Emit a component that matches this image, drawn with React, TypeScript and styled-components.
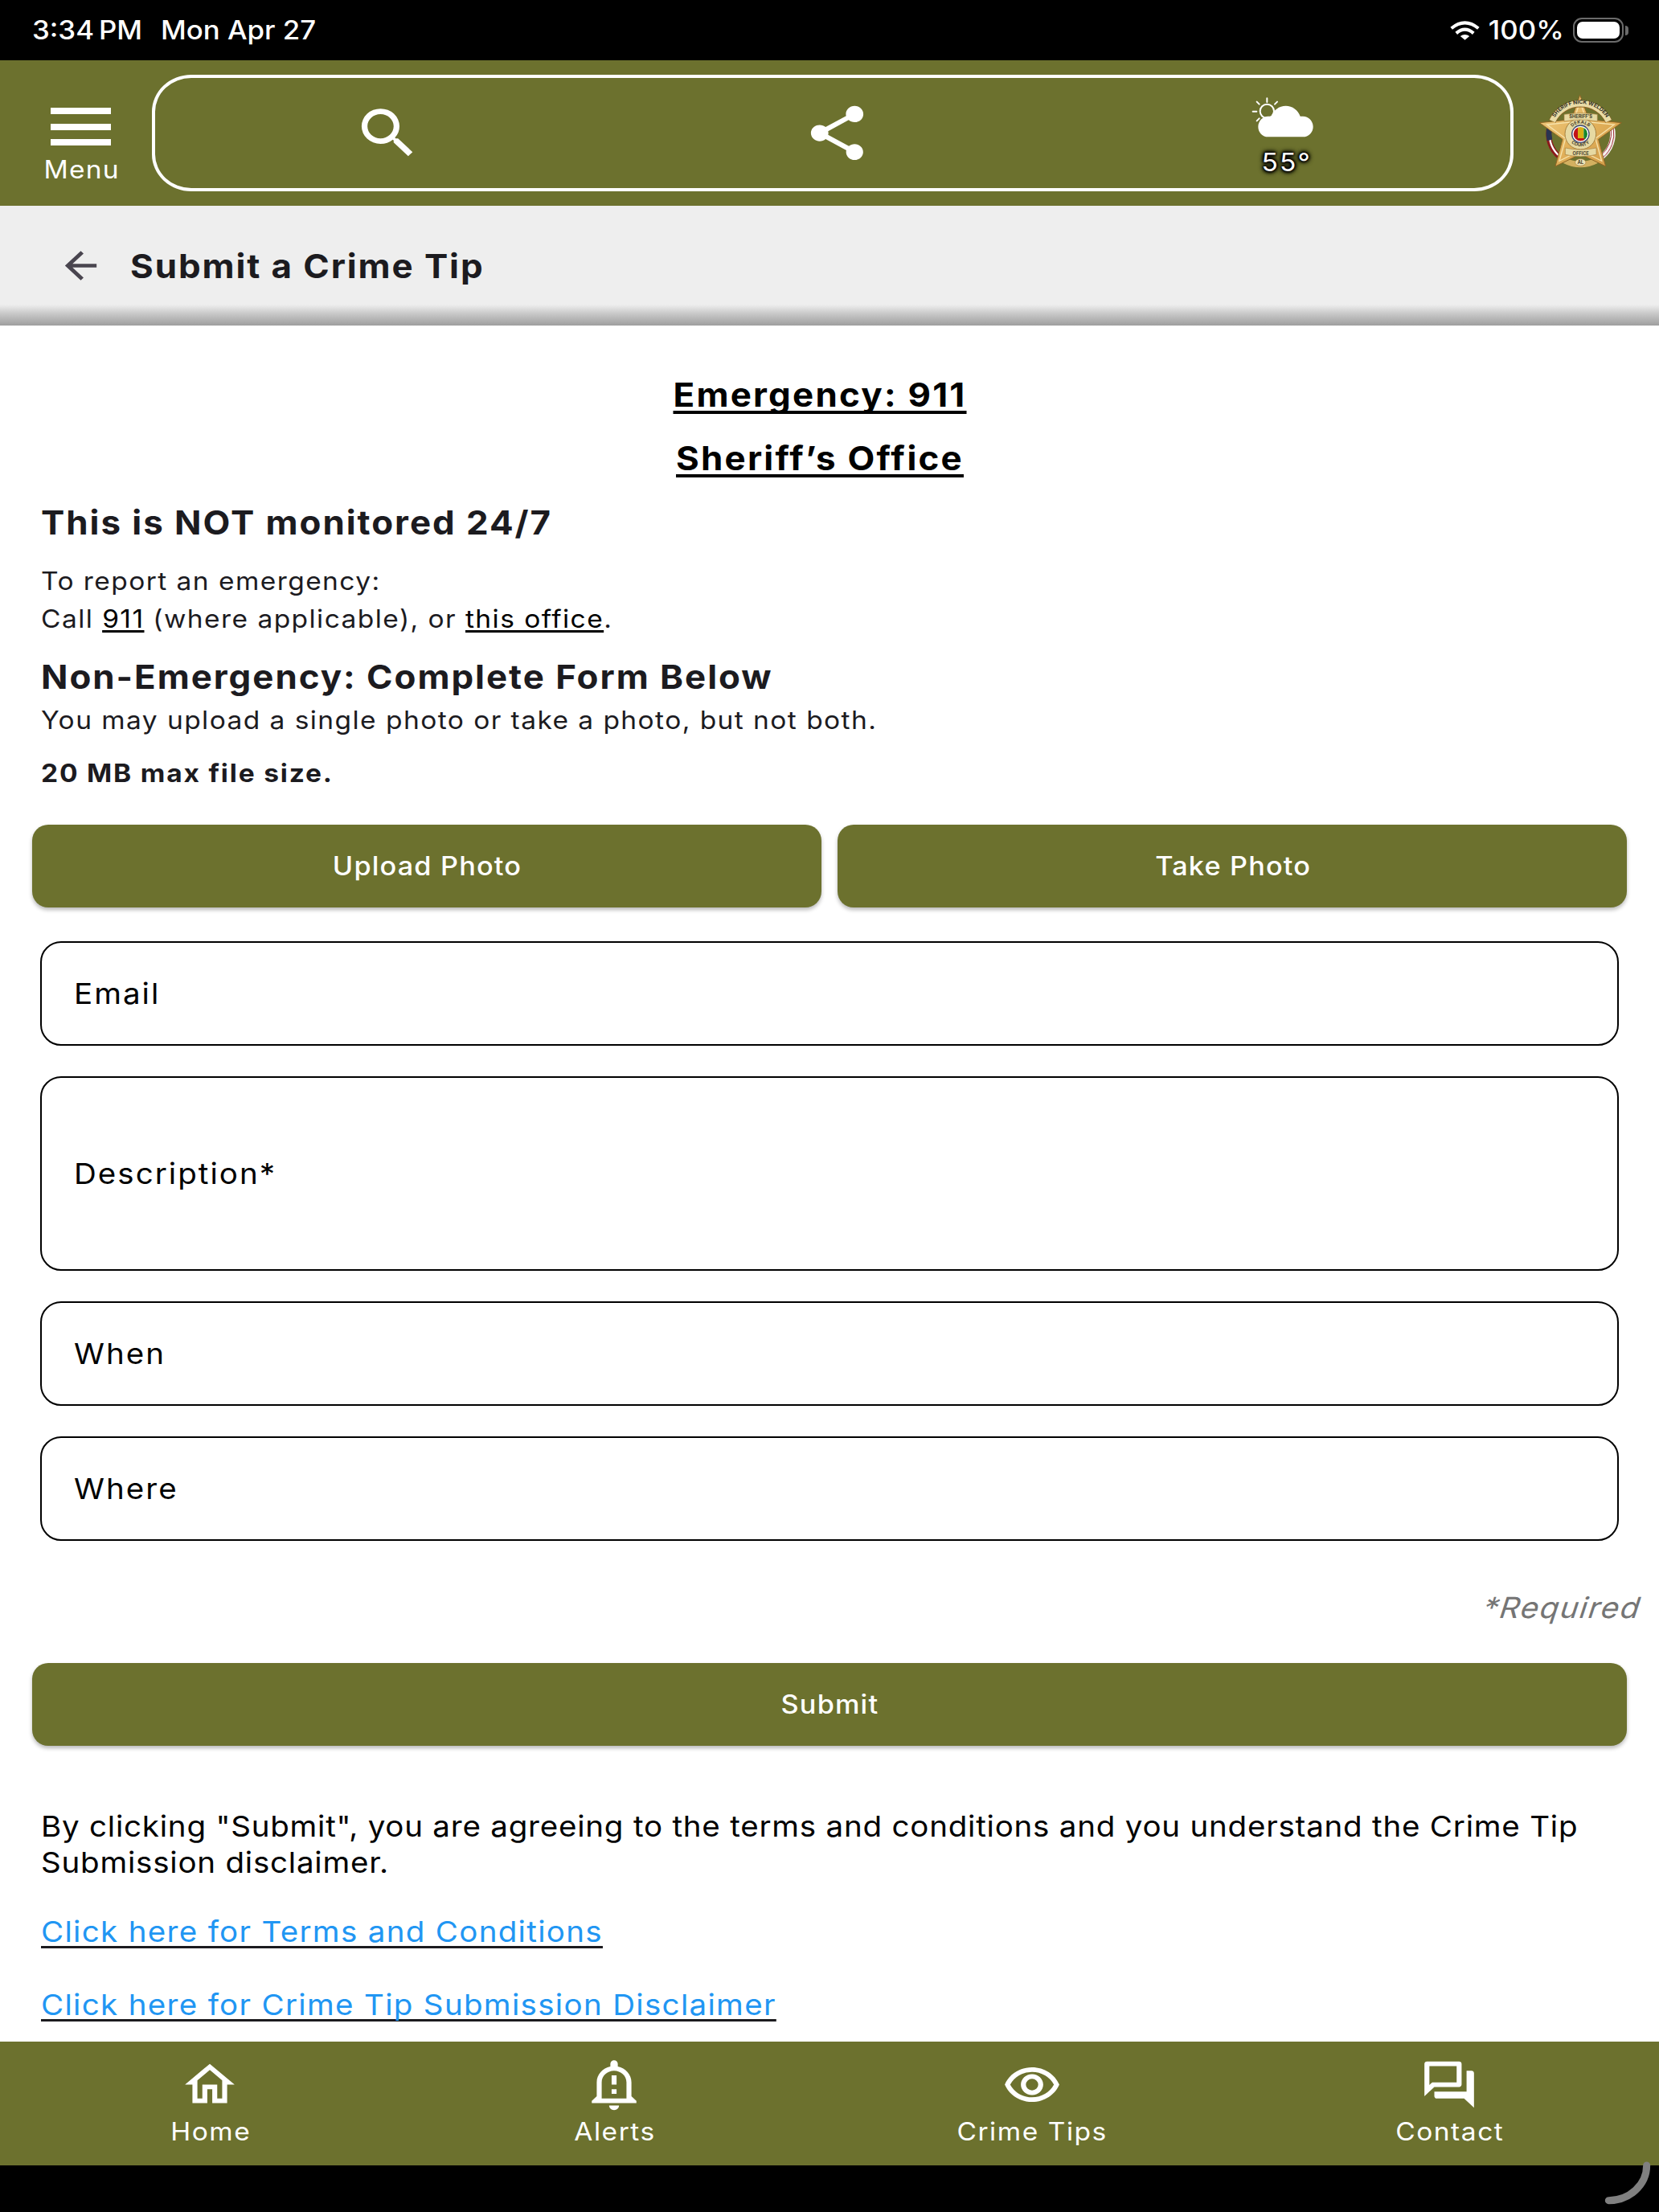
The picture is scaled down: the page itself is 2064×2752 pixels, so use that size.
import * as React from "react";
import styled, { createGlobalStyle, css } from "styled-components";
import {
  MdArrowBack,
  MdOutlineHome,
  MdOutlineNotificationImportant,
  MdOutlineQuestionAnswer,
  MdOutlineRemoveRedEye,
  MdSearch,
  MdShare
} from "react-icons/md";

const olive = "#6c712e";
const ink = "#1c1b1f";

const GlobalStyle = createGlobalStyle`
  * {
    box-sizing: border-box;
  }
  body {
    margin: 0;
    background: #000;
    font-family: Inter, "Liberation Sans", sans-serif;
  }
`;

// the type is set a little wider than Inter's own proportions
const wide = css`
  transform: scaleX(1.07);
  transform-origin: 0 50%;
`;

const Screen = styled.div`
  position: relative;
  display: flex;
  flex-direction: column;
  width: 2064px;
  height: 2752px;
  overflow: hidden;
  background: #000;
`;

const StatusBar = styled.div`
  display: flex;
  align-items: center;
  flex: none;
  height: 75px;
  padding: 0 38px 0 40px;
  color: #fff;
  font-size: 32.5px;
  font-weight: 500;
`;

const StatusText = styled.span`
  ${wide}
`;

const StatusDate = styled(StatusText)`
  margin-left: 32px;
`;

const StatusRight = styled.div`
  display: flex;
  align-items: center;
  margin-left: auto;
`;

const ChargeText = styled(StatusText)`
  transform-origin: 100% 50%;
`;

const WifiIcon = styled.svg`
  width: 37px;
  height: 24px;
  margin-right: 17px;
`;

const Battery = styled.div`
  width: 63px;
  height: 31px;
  margin-left: 11px;
  padding: 3px;
  border: 2px solid #6b6b6b;
  border-radius: 11px;
`;

const BatteryLevel = styled.div`
  height: 100%;
  border-radius: 7px;
  background: #fff;
`;

const BatteryCap = styled.div`
  width: 4px;
  height: 12px;
  margin-left: 2px;
  border-radius: 0 4px 4px 0;
  background: #6b6b6b;
`;

const Header = styled.header`
  display: grid;
  grid-template-columns: 189px 1694px 1fr;
  flex: none;
  height: 181px;
  background: ${olive};
  color: #fff;
`;

const MenuButton = styled.div`
  display: flex;
  flex-direction: column;
  align-items: center;
  width: 177px;
  margin-left: 12px;
  padding-top: 59px;
`;

const MenuLines = styled.div`
  display: grid;
  gap: 11.5px;
  width: 75px;
`;

const MenuLine = styled.span`
  height: 8px;
  background: #fff;
`;

const Label = styled.span`
  ${wide}
  transform-origin: 50% 50%;
  padding-left: 1.5px;
  line-height: 38px;
  font-size: 31.3px;
  letter-spacing: 1.45px;
  white-space: nowrap;
`;

const MenuLabel = styled(Label)`
  margin-top: 11px;
  letter-spacing: 1.2px;
`;

const Tools = styled.div`
  display: grid;
  grid-template-columns: 578px 541px 567px;
  height: 145px;
  margin-top: 18px;
  border: 4px solid #fff;
  border-radius: 49px / 46px;
`;

const Tool = styled.div`
  display: flex;
  flex-direction: column;
  align-items: center;
  justify-content: center;

  svg {
    width: 87px;
    height: 81px;
  }
`;

const Weather = styled(Tool)`
  padding-top: 11px;

  svg {
    width: 78px;
    height: 50px;
  }
`;

const Degrees = styled(Label)`
  margin: 12px 0 0 8px;
  letter-spacing: 2px;
  text-shadow: 0 0 3px #000, 0 0 3px #000, 0 0 4px #000, 0 0 5px #000,
    0 0 6px #000, 0 0 7px #000;
`;

const BadgeSvg = styled.svg`
  align-self: center;
  width: 140px;
  height: 130px;
  margin-left: 17px;
`;

const TitleBar = styled.div`
  display: flex;
  align-items: center;
  gap: 32px;
  flex: none;
  height: 149px;
  padding-left: 71px;
  color: #49454f;
  background: linear-gradient(#eee 123px, #c9c9c9 134px, #9e9e9e 149px);

  svg {
    width: 59px;
    height: 55px;
  }
`;

const Title = styled.h1`
  ${wide}
  margin: 0;
  color: ${ink};
  font-size: 41px;
  font-weight: 700;
  letter-spacing: 1.8px;
`;

const Content = styled.main`
  flex: none;
  height: 2135px;
  padding: 46.5px 40px 0;
  overflow: hidden;
  background: #fff;
  color: ${ink};
`;

const Intro = styled.section`
  padding-left: 11px;
`;

const Heading = styled.h2<{ $height: number; $top?: number }>`
  ${wide}
  margin: ${(p) => p.$top || 0}px 0 0;
  line-height: ${(p) => p.$height}px;
  font-size: 41px;
  font-weight: 700;
  letter-spacing: 1.85px;
`;

const CallLine = styled(Heading)`
  margin: 0 24px 0 -11px;
  transform-origin: 50% 50%;
  text-align: center;
  letter-spacing: 2.1px;
`;

const CallLink = styled.a`
  color: #000;
  text-decoration: underline;
  text-decoration-skip-ink: none;
  text-decoration-thickness: 4px;
  text-underline-offset: 5px;
`;

const InlineLink = styled(CallLink)`
  text-decoration-thickness: 2.5px;
  text-underline-offset: 3px;
`;

const Note = styled.p<{ $height: number; $top?: number; $bold?: boolean }>`
  ${wide}
  margin: ${(p) => p.$top || 0}px 0 0;
  line-height: ${(p) => p.$height}px;
  font-size: 31.3px;
  font-weight: ${(p) => (p.$bold ? 700 : 400)};
  letter-spacing: ${(p) => (p.$bold ? 1.7 : 1.35)}px;
`;

const Buttons = styled.div<{ $top: number }>`
  display: grid;
  grid-auto-flow: column;
  grid-auto-columns: 1fr;
  gap: 20px;
  margin-top: ${(p) => p.$top}px;
`;

const Button = styled.button`
  height: 103px;
  padding: 0;
  border: 0;
  border-radius: 20px;
  background: ${olive};
  box-shadow: 0 3px 5px rgba(0, 0, 0, 0.28);
  color: #fff;
  font: inherit;
  font-size: 32px;
  font-weight: 500;
  letter-spacing: 1.1px;

  span {
    display: inline-block;
    padding-left: 1.5px;
    transform: scaleX(1.07);
  }
`;

const Fields = styled.div`
  display: grid;
  gap: 37.5px;
  margin: 42px 10px 0;
`;

const Field = styled.div<{ $height?: number }>`
  display: flex;
  align-items: center;
  height: ${(p) => p.$height || 130.5}px;
  padding-left: 39.5px;
  border: 2.5px solid #000;
  border-radius: 26px;
  color: #000;
  font-size: 36px;
  letter-spacing: 1.9px;

  span {
    ${wide}
  }
`;

const Required = styled.div`
  margin: 60px -18px 0 0;
  text-align: right;
  line-height: 46px;
  color: #757575;
  font-size: 36px;
  letter-spacing: 1.5px;

  span {
    display: inline-block;
    transform: skewX(-18deg) scaleX(1.07);
    transform-origin: 100% 50%;
  }
`;

const Terms = styled.section`
  ${wide}
  width: 1844px;
  margin-left: 11px;
  margin-top: 78px;
  color: #000;
  line-height: 44.7px;
  font-size: 36px;

  p {
    margin: 0;
    letter-spacing: 0.73px;
  }
`;

const TermsLink = styled.a<{ $top: number }>`
  display: table;
  margin-top: ${(p) => p.$top}px;
  color: #2196f3;
  letter-spacing: 1.23px;
  text-decoration: underline ${ink} 2.5px;
  text-decoration-skip-ink: none;
  text-underline-offset: 5px;
`;

const TabBar = styled.nav`
  display: grid;
  grid-template-columns: 522px 484px 555px 483px;
  flex: none;
  height: 154px;
  background: ${olive};
  color: #fff;
`;

const Tab = styled.div`
  display: flex;
  flex-direction: column;
  align-items: center;
  gap: 5px;
  padding-top: 19px;

  svg {
    width: 74px;
    height: 69px;
  }
`;

const CornerHandle = styled.svg`
  position: absolute;
  right: 0;
  bottom: 0;
  width: 74px;
  height: 72px;
`;

const tabs = [
  { label: "Home", Icon: MdOutlineHome },
  { label: "Alerts", Icon: MdOutlineNotificationImportant },
  { label: "Crime Tips", Icon: MdOutlineRemoveRedEye },
  { label: "Contact", Icon: MdOutlineQuestionAnswer }
];

function WeatherIcon() {
  return (
    <svg viewBox="36 26 234 150" fill="none" preserveAspectRatio="none">
      <g stroke="#fff" strokeWidth="6" strokeLinecap="round">
        <circle cx="94" cy="78" r="26" />
        <path d="M94 30v14M132 43l-9 9M56 43l9 9M41 79h14M56 114l9-9" />
      </g>
      <path
        fill="#fff"
        d="M98 174C77 174 61 157 61 136C61 114 78 97 98 97H110C118 74 139 58 164 58C189 58 210 74 218 97H228C249 97 266 114 266 136C266 157 249 174 228 174Z"
      />
    </svg>
  );
}

function Badge() {
  return (
    <BadgeSvg viewBox="0 0 420 390" preserveAspectRatio="none">
      <defs>
        <linearGradient id="gold" x1="0" y1="0" x2="1" y2="1">
          <stop offset="0" stopColor="#f0cf86" />
          <stop offset="0.5" stopColor="#e3b25c" />
          <stop offset="1" stopColor="#cf9a45" />
        </linearGradient>
        <path id="nameArc" d="M97 147A111 104 0 0 1 301 147" />
        <path id="countyTop" d="M161 184A40 38 0 0 1 237 184" />
        <path id="countyBottom" d="M154 215A49 47 0 0 0 244 215" />
        <clipPath id="seal">
          <circle cx="199" cy="197" r="26" />
        </clipPath>
      </defs>

      {/* flag ring */}
      <g fill="none">
        <path d="M84 170A120 112 0 0 0 122 283" stroke="#8c1a1c" strokeWidth="20" />
        <path d="M84 190A120 112 0 0 0 122 281" stroke="#fff" strokeWidth="7" />
        <path d="M84 170A120 112 0 0 0 84 220" stroke="#2a3350" strokeWidth="20" />
        <path d="M316 172A120 112 0 0 1 278 283" stroke="#f4f0ee" strokeWidth="20" />
        <path d="M313 178A112 112 0 0 1 276 276M322 178A122 118 0 0 1 284 284" stroke="#a3343b" strokeWidth="3" />
        <path d="M140 296A120 112 0 0 0 258 296" stroke="#d3b060" strokeWidth="22" />
      </g>

      {/* star */}
      <path
        d="M197 52L231 143L352 155L266 217L293 318L199 272L105 318L132 217L46 155L165 143Z"
        fill="url(#gold)"
        stroke="#8e6424"
        strokeWidth="3"
      />
      <path
        d="M197 76L223 152L325 162L255 214L278 298L199 258L120 298L143 214L74 162L173 152Z"
        fill="none"
        stroke="#f7e3ac"
        strokeWidth="4"
      />

      {/* name band */}
      <path d="M94 150A114 108 0 0 1 304 150" fill="none" stroke="#8e6424" strokeWidth="27" />
      <path d="M94 149A114 108 0 0 1 304 149" fill="none" stroke="#e9dba6" strokeWidth="23" />
      <text fontSize="20" fontWeight="700" fill="#33301f">
        <textPath href="#nameArc" startOffset="50%" textAnchor="middle">
          SHERIFF NICK WELDEN
        </textPath>
      </text>

      <circle cx="199" cy="197" r="58" fill="#e6d9a2" stroke="#a68140" strokeWidth="3" />
      <circle cx="199" cy="197" r="32" fill="#fff" stroke="#3d4a75" strokeWidth="4" />
      <g clipPath="url(#seal)">
        <path fill="#c3131a" d="M170 168h20v60h-20z" />
        <path fill="#d8ae14" d="M189 168h22v60h-22z" />
        <path fill="#17852c" d="M211 168h20v60h-20z" />
        <path fill="#c3131a" d="M188 213h26v14h-26z" />
      </g>

      {/* ribbons */}
      <path d="M138 124Q199 114 262 124V150Q199 138 138 150Z" fill="#e6d9a2" stroke="#a68140" strokeWidth="2" />
      <path d="M142 249Q199 262 258 249V274Q199 288 142 274Z" fill="#e6d9a2" stroke="#a68140" strokeWidth="2" />
      <ellipse cx="199" cy="303" rx="20" ry="13" fill="#eee3b4" stroke="#a68140" strokeWidth="2" />
      <g fill="#4a432c" fontSize="17" fontWeight="700" textAnchor="middle">
        <text x="200" y="139">SHERIFF’S</text>
        <text x="200" y="275">OFFICE</text>
        <text x="199" y="310" fontSize="18">AL</text>
        <text>
          <textPath href="#countyTop" startOffset="50%">DEKALB</textPath>
        </text>
        <text>
          <textPath href="#countyBottom" startOffset="50%">COUNTY</textPath>
        </text>
      </g>
    </BadgeSvg>
  );
}

export default function App() {
  return (
    <Screen>
      <GlobalStyle />
      <StatusBar>
        <StatusText>3:34&#8201;PM</StatusText>
        <StatusDate>Mon Apr 27</StatusDate>
        <StatusRight>
          <WifiIcon viewBox="0 0 110 70" fill="none" stroke="#fff" strokeWidth="12">
            <path d="M5 27Q55 -14 105 27M23 45Q55 17 87 45" />
            <path d="M38 56Q55 43 72 56L55 70Z" fill="#fff" stroke="none" />
          </WifiIcon>
          <ChargeText>100%</ChargeText>
          <Battery>
            <BatteryLevel />
          </Battery>
          <BatteryCap />
        </StatusRight>
      </StatusBar>

      <Header>
        <MenuButton>
          <MenuLines>
            <MenuLine />
            <MenuLine />
            <MenuLine />
          </MenuLines>
          <MenuLabel>Menu</MenuLabel>
        </MenuButton>
        <Tools>
          <Tool>
            <MdSearch preserveAspectRatio="none" />
          </Tool>
          <Tool>
            <MdShare preserveAspectRatio="none" />
          </Tool>
          <Weather>
            <WeatherIcon />
            <Degrees>55°</Degrees>
          </Weather>
        </Tools>
        <Badge />
      </Header>

      <TitleBar>
        <MdArrowBack preserveAspectRatio="none" />
        <Title>Submit a Crime Tip</Title>
      </TitleBar>

      <Content>
        <Intro>
          <CallLine $height={79.6}>
            <CallLink>Emergency: 911</CallLink>
          </CallLine>
          <CallLine $height={79.6}>
            <CallLink>Sheriff’s Office</CallLink>
          </CallLine>
          <Heading $height={79.6}>This is NOT monitored 24/7</Heading>
          <Note $height={46.7} $top={10}>
            To report an emergency:
            <br />
            Call <InlineLink>911</InlineLink> (where applicable), or{" "}
            <InlineLink>this office</InlineLink>.
          </Note>
          <Heading $height={56} $top={20}>
            Non-Emergency: Complete Form Below
          </Heading>
          <Note $height={53.6}>
            You may upload a single photo or take a photo, but not both.
          </Note>
          <Note $height={46} $top={15.5} $bold>
            20 MB max file size.
          </Note>
        </Intro>

        <Buttons $top={41}>
          <Button>
            <span>Upload Photo</span>
          </Button>
          <Button>
            <span>Take Photo</span>
          </Button>
        </Buttons>

        <Fields>
          <Field>
            <span>Email</span>
          </Field>
          <Field $height={242.5}>
            <span>Description*</span>
          </Field>
          <Field>
            <span>When</span>
          </Field>
          <Field>
            <span>Where</span>
          </Field>
        </Fields>

        <Required>
          <span>*Required</span>
        </Required>

        <Buttons $top={46}>
          <Button>
            <span>Submit</span>
          </Button>
        </Buttons>

        <Terms>
          <p>
            By clicking "Submit", you are agreeing to the terms and conditions
            and you understand the Crime Tip Submission disclaimer.
          </p>
          <TermsLink $top={41}>Click here for Terms and Conditions</TermsLink>
          <TermsLink $top={46.3}>
            Click here for Crime Tip Submission Disclaimer
          </TermsLink>
        </Terms>
      </Content>

      <TabBar>
        {tabs.map(({ label, Icon }) => (
          <Tab key={label}>
            <Icon preserveAspectRatio="none" />
            <Label>{label}</Label>
          </Tab>
        ))}
      </TabBar>

      <CornerHandle viewBox="0 0 222 216" fill="none">
        <path
          d="M176 42A142 131 0 0 1 34 173"
          stroke="#808080"
          strokeWidth="27"
          strokeLinecap="round"
        />
      </CornerHandle>
    </Screen>
  );
}
